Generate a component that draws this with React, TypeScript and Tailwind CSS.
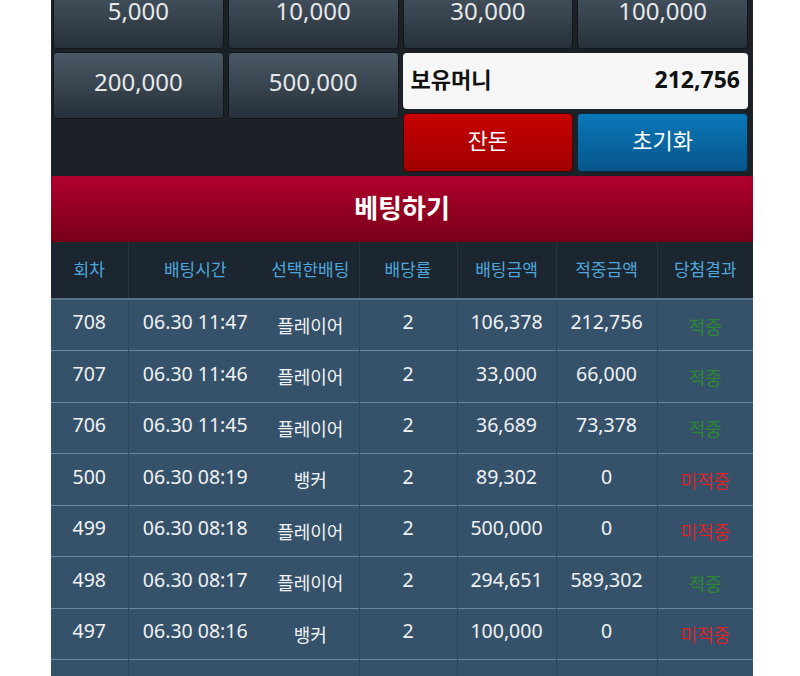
import React from "react";

const FONT = { fontFamily: '"Noto Sans", "Noto Sans CJK KR", sans-serif' };

type Row = {
  no: string;
  time: string;
  pick: string;
  odds: string;
  bet: string;
  win: string;
  result: "적중" | "미적중";
};

const rows: Row[] = [
  { no: "708", time: "06.30 11:47", pick: "플레이어", odds: "2", bet: "106,378", win: "212,756", result: "적중" },
  { no: "707", time: "06.30 11:46", pick: "플레이어", odds: "2", bet: "33,000", win: "66,000", result: "적중" },
  { no: "706", time: "06.30 11:45", pick: "플레이어", odds: "2", bet: "36,689", win: "73,378", result: "적중" },
  { no: "500", time: "06.30 08:19", pick: "뱅커", odds: "2", bet: "89,302", win: "0", result: "미적중" },
  { no: "499", time: "06.30 08:18", pick: "플레이어", odds: "2", bet: "500,000", win: "0", result: "미적중" },
  { no: "498", time: "06.30 08:17", pick: "플레이어", odds: "2", bet: "294,651", win: "589,302", result: "적중" },
  { no: "497", time: "06.30 08:16", pick: "뱅커", odds: "2", bet: "100,000", win: "0", result: "미적중" },
  { no: "496", time: "06.30 08:15", pick: "플레이어", odds: "2", bet: "100,000", win: "200,000", result: "적중" },
];

function ChipButton({ label, className = "" }: { label: string; className?: string }) {
  return (
    <button
      className={`flex items-center justify-center pb-[8px] rounded-[4px] border border-[#13171b] bg-gradient-to-b from-[#4a5966] to-[#27303a] text-[24px] text-[#e6e8ea] ${className}`}
      style={FONT}
    >
      {label}
    </button>
  );
}

const widths = ["w-[77px]", "w-[134px]", "w-[97px]", "w-[98px]", "w-[99px]", "w-[101px]", "w-[96px]"];

export default function App() {
  return (
    <div className="h-[676px] overflow-hidden bg-white" style={FONT}>
      <div className="ml-[51px] w-[702px] -mt-[19px] bg-[#1c2127]">
        <div className="pl-[2px] pr-[5px] pb-[4px]">
          <div className="grid grid-cols-4 gap-x-[4px] gap-y-[3px]">
            <ChipButton label="5,000" className="h-[68px]" />
            <ChipButton label="10,000" className="h-[68px]" />
            <ChipButton label="30,000" className="h-[68px]" />
            <ChipButton label="100,000" className="h-[68px]" />
            <ChipButton label="200,000" className="h-[67px]" />
            <ChipButton label="500,000" className="h-[67px]" />
            <div className="col-span-2 flex flex-col">
              <div className="mt-[1px] h-[56px] rounded-[4px] bg-[#f6f6f6] flex items-center justify-between px-[8px] pb-[4px]">
                <span className="text-[22px] font-bold text-[#111]">보유머니</span>
                <span className="text-[23px] font-bold text-[#111]">212,756</span>
              </div>
              <div className="mt-[4px] grid grid-cols-2 gap-x-[4px]">
                <button className="h-[59px] rounded-[4px] border border-[#3a0a0a] bg-gradient-to-b from-[#c80202] to-[#a00000] text-[22px] text-white flex items-center justify-center pb-[4px]">
                  잔돈
                </button>
                <button className="h-[59px] rounded-[4px] border border-[#0b2a40] bg-gradient-to-b from-[#0a78b8] to-[#07568c] text-[22px] text-white flex items-center justify-center pb-[4px]">
                  초기화
                </button>
              </div>
            </div>
          </div>
        </div>

        <div className="h-[66px] rounded-[3px] bg-gradient-to-b from-[#b2002c] to-[#780018] flex items-center justify-center pb-[2px]">
          <span className="text-[26px] font-bold text-white">베팅하기</span>
        </div>

        <table className="w-[702px] table-fixed border-collapse">
          <thead>
            <tr className="h-[57px] bg-[#1b2630] border-b-[2px] border-[#5a7285]">
              {["회차", "배팅시간", "선택한배팅", "배당률", "배팅금액", "적중금액", "당첨결과"].map((h, i) => (
                <th
                  key={h}
                  className={`${widths[i]} p-0 text-[17px] font-normal text-[#4fa6dc] ${i !== 1 && i !== 6 ? "border-r border-[#26343f]" : ""}`}
                >
                  {h}
                </th>
              ))}
            </tr>
          </thead>
          <tbody>
            {rows.map((r) => (
              <tr key={r.no} className="h-[51.5px] bg-[#36526a] border-b border-[#6888a0]">
                <td className="p-0 pb-[6px] text-center text-[19.5px] text-[#f0f2f4] border-r border-[#2f475a]">{r.no}</td>
                <td className="p-0 pb-[6px] text-center text-[19.5px] text-[#f0f2f4]">{r.time}</td>
                <td className="p-0 pt-[3px] text-center text-[18px] text-[#f0f2f4] border-r border-[#2f475a]">{r.pick}</td>
                <td className="p-0 pb-[6px] text-center text-[19.5px] text-[#f0f2f4] border-r border-[#2f475a]">{r.odds}</td>
                <td className="p-0 pb-[6px] text-center text-[19.5px] text-[#f0f2f4] border-r border-[#2f475a]">{r.bet}</td>
                <td className="p-0 pb-[6px] text-center text-[19.5px] text-[#f0f2f4] border-r border-[#2f475a]">{r.win}</td>
                <td
                  className={`p-0 pt-[4px] text-center text-[18px] ${
                    r.result === "적중" ? "text-[#2b8a31]" : "text-[#dc2227]"
                  }`}
                >
                  {r.result}
                </td>
              </tr>
            ))}
          </tbody>
        </table>
      </div>
    </div>
  );
}
